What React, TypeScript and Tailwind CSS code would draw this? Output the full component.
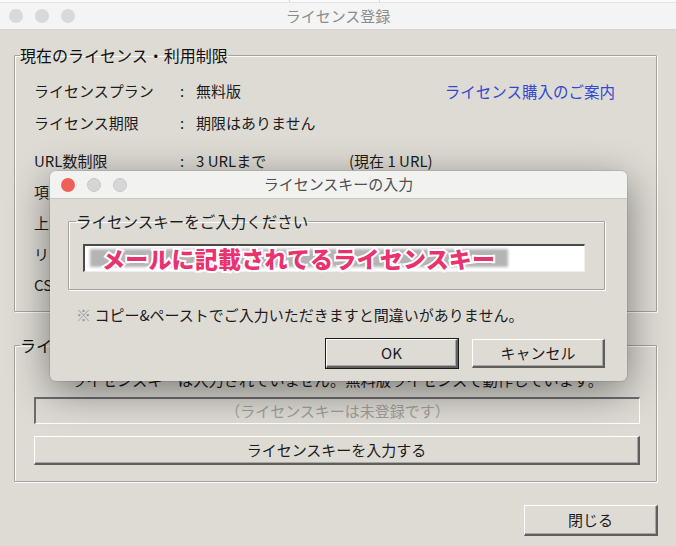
import clsx from "clsx";

interface RowProps {
  label: string;
  value: string;
  extra?: React.ReactNode;
  className?: string;
}

function Row({ label, value, extra, className }: RowProps) {
  return (
    <div className={clsx("flex items-center h-[31px] whitespace-nowrap", className)}>
      <span className="w-[146px]">{label}</span>
      <span className="w-[16px]">:</span>
      <span className="w-[153px]">{value}</span>
      {extra}
    </div>
  );
}

function Dot({ color }: { color: string }) {
  return <span className={clsx("w-[14px] h-[14px] rounded-full", color)} />;
}

const groupBox =
  "border border-[#a4a29e] shadow-[inset_1px_1px_0_#fbfaf8,1px_1px_0_#fbfaf8] rounded-[1px]";

const raised =
  "bg-[#dedbd5] border-t border-l border-t-white border-l-white border-b-2 border-r-2 border-b-[#5e5e5e] border-r-[#5e5e5e] shadow-[inset_-1px_-1px_0_#a9a6a1]";

export default function App() {
  return (
    <div className="relative w-[676px] h-[546px] overflow-hidden bg-[#dedbd5] text-[15px] text-[#1c1c1c] font-['Noto_Sans_CJK_JP','Noto_Sans',sans-serif]">
      {/* window behind */}
      <div className="h-[3px] bg-[#fafafa] border-b border-[#e4e4e4] flex">
        <div className="w-[290px] border-r border-[#d8d8d8]" />
        <div className="w-[90px] border-r border-[#d8d8d8]" />
      </div>
      {/* title bar */}
      <div className="h-[27px] bg-[#f4f4f4] border-b border-[#d6d4cf] flex items-center relative">
        <div className="flex gap-[12px] pl-[9px]">
          <Dot color="bg-[#d9d9d9]" />
          <Dot color="bg-[#d9d9d9]" />
          <Dot color="bg-[#d9d9d9]" />
        </div>
        <div className="absolute inset-0 flex items-center justify-center text-[#8c8c8c] text-[15px]">
          ライセンス登録
        </div>
      </div>

      <div className="px-[14px] pt-[14px] pr-[19px]">
        <fieldset className={clsx(groupBox, "pl-[19px] pr-[41px] pb-[10px]")}>
          <legend className="-ml-[14px] text-[16px] leading-[22px] text-[#111]">
            現在のライセンス・利用制限
          </legend>
          <div className="pt-[10px]">
            <Row
              label="ライセンスプラン"
              value="無料版"
              extra={
                <span className="ml-auto text-[15.5px] text-[#3149d0] cursor-pointer">
                  ライセンス購入のご案内
                </span>
              }
            />
            <Row label="ライセンス期限" value="期限はありません" className="h-[33px]" />
            <Row
              label="URL数制限"
              value="3 URLまで"
              extra={<span>(現在 1 URL)</span>}
              className="mt-[6px]"
            />
            <Row label="項目数制限" value="100 項目まで" />
            <Row label="上限到達時の通知" value="あり" />
            <Row label="リンクチェック" value="利用できません" />
            <Row label="CSV出力" value="利用できません" />
          </div>
        </fieldset>

        <fieldset className={clsx(groupBox, "mt-[22px] pl-[19px] pr-[16px] pb-[16px]")}>
          <legend className="-ml-[14px] text-[16px] leading-[22px] text-[#111]">
            ライセンスキー
          </legend>
          <div className="text-center text-[15.3px] leading-[22px] mt-[12px] whitespace-nowrap">
            ライセンスキーは入力されていません。無料版ライセンスで動作しています。
          </div>
          <div className="mt-[7px] h-[27px] flex items-center justify-center border-t-2 border-l-2 border-t-[#6d6d6d] border-l-[#6d6d6d] border-b border-r border-b-white border-r-white text-[#a09e9a]">
            （ライセンスキーは未登録です）
          </div>
          <button className={clsx(raised, "mt-[12px] w-full h-[29px] flex items-center justify-center")}>
            ライセンスキーを入力する
          </button>
        </fieldset>

        <div className="flex justify-end mt-[23px] -mr-[1px]">
          <button className={clsx(raised, "w-[134px] h-[31px] flex items-center justify-center")}>
            閉じる
          </button>
        </div>
      </div>

      {/* modal dialog */}
      <div className="absolute left-[50px] top-[171px] w-[577px] h-[210px] rounded-[6px] bg-[#dedbd5] overflow-hidden shadow-[0_10px_40px_rgba(0,0,0,0.45),0_0_0_1px_rgba(0,0,0,0.08)]">
        <div className="h-[28px] bg-[#f2f2f1] border-b border-[#c9c7c2] flex items-center relative">
          <div className="flex gap-[12px] pl-[11px]">
            <Dot color="bg-[#ee6058]" />
            <Dot color="bg-[#d6d6d6] border border-[#c9c9c9]" />
            <Dot color="bg-[#d6d6d6] border border-[#c9c9c9]" />
          </div>
          <div className="absolute inset-0 flex items-center justify-center text-[#505050] text-[15px]">
            ライセンスキーの入力
          </div>
        </div>
        <div className="pl-[18px] pr-[22px]">
          <fieldset className={clsx(groupBox, "mt-[11px] pl-[14px] pr-[19px] pb-[17px]")}>
            <legend className="-ml-[7px] text-[15.5px] leading-[22px]">
              ライセンスキーをご入力ください
            </legend>
            <div className="mt-[12px] h-[28px] bg-white border-t-2 border-l-2 border-t-[#4a4a4a] border-l-[#4a4a4a] border-b border-r border-b-[#efefef] border-r-[#efefef] flex items-center pl-[5px]">
              <div className="relative flex items-center">
                <div className="absolute left-[0px] top-[2px] w-[418px] h-[18px] bg-[#b4b4b4] blur-[1.5px]" />
                <span className="relative pl-[12px] text-[23px] leading-none font-black tracking-[0.2px] text-[#e8336f] [paint-order:stroke_fill] [-webkit-text-stroke:4px_#ffffff] whitespace-nowrap">
                  メールに記載されてるライセンスキー
                </span>
              </div>
            </div>
          </fieldset>
          <div className="mt-[14px] pl-[8px] leading-[22px] whitespace-nowrap">
            <span className="text-[#9a9a9a]">※</span> コピー&amp;ペーストでご入力いただきますと間違いがありません。
          </div>
          <div className="mt-[13px] flex justify-end gap-[14px]">
            <button className={clsx(raised, "w-[132px] h-[29px] flex items-center justify-center outline outline-1 outline-[#1a1a1a]")}>
              OK
            </button>
            <button className={clsx(raised, "w-[133px] h-[29px] flex items-center justify-center")}>
              キャンセル
            </button>
          </div>
        </div>
      </div>
    </div>
  );
}
